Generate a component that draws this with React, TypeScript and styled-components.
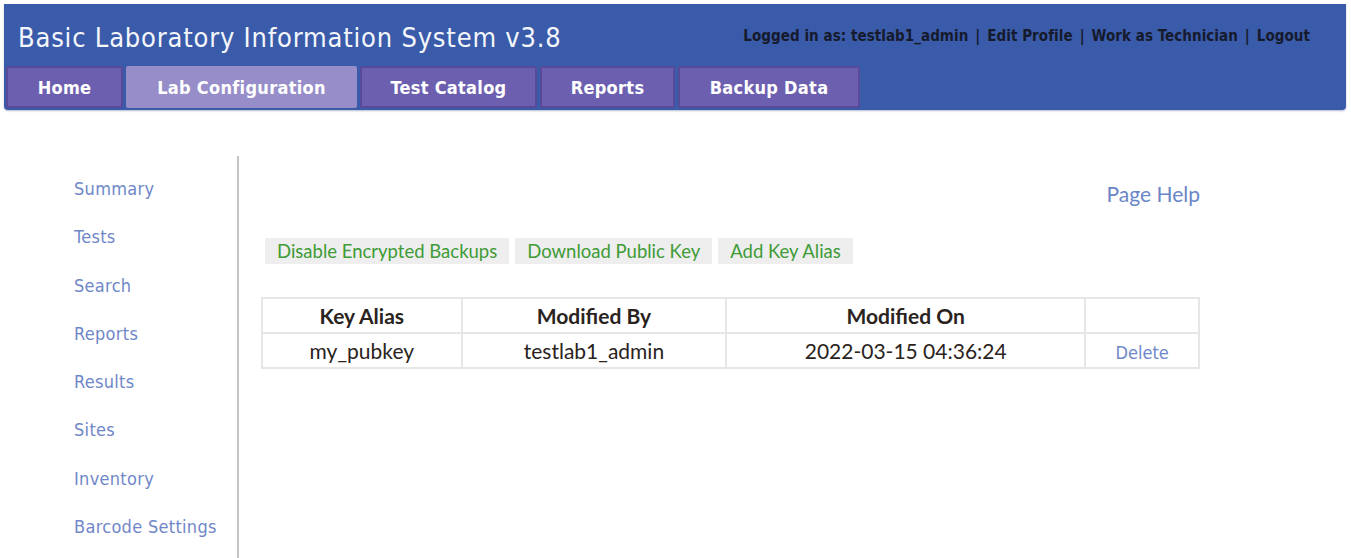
import React from "react";
import styled, { createGlobalStyle } from "styled-components";

const GlobalStyle = createGlobalStyle`
  html, body {
    margin: 0;
    padding: 0;
    background: #ffffff;
  }
  body {
    font-family: "DejaVu Sans Condensed", "DejaVu Sans", sans-serif;
  }
`;

const tahoma = `"DejaVu Sans Condensed", "DejaVu Sans", sans-serif`;
const calibri = `Lato, "Open Sans", sans-serif`;

const Page = styled.div`
  padding: 4px 5px 0 4px;
  height: 558px;
  box-sizing: border-box;
  overflow: hidden;
`;

const Header = styled.header`
  background: #3a5ba9;
  height: 106px;
  border-radius: 0 0 4px 4px;
  box-shadow: 0 1px 2px rgba(40, 60, 120, 0.35);
  display: flex;
  flex-direction: column;
  justify-content: space-between;
`;

const TopRow = styled.div`
  display: flex;
  justify-content: space-between;
  align-items: center;
  padding: 18px 36px 0 14px;
`;

const Title = styled.h1`
  margin: 0;
  font-family: ${tahoma};
  font-weight: normal;
  font-size: 27px;
  color: #f4f6fb;
  letter-spacing: 0.8px;
`;

const UserBar = styled.div`
  font-family: ${tahoma};
  font-weight: bold;
  font-size: 15px;
  letter-spacing: 0.05px;
  color: #151a2c;
  margin-top: -4px;
  a {
    color: inherit;
    text-decoration: none;
  }
`;

const Sep = styled.span`
  margin: 0 7px;
`;

const Tabs = styled.nav`
  display: flex;
  gap: 3px;
  padding: 0 0 2px 2px;
`;

const Tab = styled.a<{ $w: number; $active?: boolean }>`
  width: ${({ $w }) => $w}px;
  height: 42px;
  box-sizing: border-box;
  display: flex;
  align-items: center;
  justify-content: center;
  font-family: ${tahoma};
  font-weight: bold;
  font-size: 18px;
  letter-spacing: 0.3px;
  color: #ffffff;
  text-decoration: none;
  background: ${({ $active }) => ($active ? "#978dc9" : "#6d5fb0")};
  border: 2px solid ${({ $active }) => ($active ? "#978dc9" : "#574a98")};
  border-radius: 2px;
`;

const Body = styled.div`
  display: flex;
  margin-top: 46px;
`;

const Sidebar = styled.aside`
  width: 235px;
  flex-shrink: 0;
  border-right: 2px solid #c4c4c4;
  height: 420px;
  padding: 22px 0 0 70px;
  box-sizing: border-box;
  display: flex;
  flex-direction: column;
  gap: 26.3px;
`;

const SideLink = styled.a`
  font-family: ${tahoma};
  font-size: 18px;
  letter-spacing: 0.3px;
  line-height: 22px;
  color: #6f87c8;
  text-decoration: none;
`;

const Content = styled.main`
  width: 961px;
  box-sizing: border-box;
  padding: 26px 0 0 22px;
  display: flex;
  flex-direction: column;
`;

const HelpLink = styled.a`
  align-self: flex-end;
  font-family: ${calibri};
  font-size: 21px;
  line-height: 24px;
  color: #6a86c6;
  text-decoration: none;
`;

const Actions = styled.div`
  display: flex;
  gap: 6px;
  margin: 32px 0 0 4px;
`;

const ActionButton = styled.a`
  background: #eeeeee;
  color: #3e9b36;
  font-family: ${calibri};
  font-size: 18.5px;
  height: 26px;
  padding: 0 12px;
  display: flex;
  align-items: center;
  text-decoration: none;
`;

const Table = styled.table`
  margin-top: 33px;
  width: 939px;
  border-collapse: collapse;
  font-family: ${calibri};
  color: #2a2320;
  th,
  td {
    border: 2px solid #e6e6e6;
    height: 35px;
    padding: 0;
    text-align: center;
    box-sizing: border-box;
  }
  th {
    font-weight: bold;
    font-size: 21px;
  }
  td {
    font-size: 21px;
  }
`;

const DeleteLink = styled.a`
  font-family: ${tahoma};
  font-size: 18px;
  color: #6f87c8;
  text-decoration: none;
`;

const tabs = [
  { label: "Home", w: 117 },
  { label: "Lab Configuration", w: 231, active: true },
  { label: "Test Catalog", w: 177 },
  { label: "Reports", w: 135 },
  { label: "Backup Data", w: 182 },
];

const sideLinks = [
  "Summary",
  "Tests",
  "Search",
  "Reports",
  "Results",
  "Sites",
  "Inventory",
  "Barcode Settings",
];

const keys = [
  {
    alias: "my_pubkey",
    by: "testlab1_admin",
    on: "2022-03-15 04:36:24",
  },
];

export default function App() {
  return (
    <>
      <GlobalStyle />
      <Page>
        <Header>
          <TopRow>
            <Title>Basic Laboratory Information System v3.8</Title>
            <UserBar>
              Logged in as: testlab1_admin<Sep>|</Sep>
              <a href="#">Edit Profile</a>
              <Sep>|</Sep>
              <a href="#">Work as Technician</a>
              <Sep>|</Sep>
              <a href="#">Logout</a>
            </UserBar>
          </TopRow>
          <Tabs>
            {tabs.map((t) => (
              <Tab key={t.label} href="#" $w={t.w} $active={t.active}>
                {t.label}
              </Tab>
            ))}
          </Tabs>
        </Header>
        <Body>
          <Sidebar>
            {sideLinks.map((l) => (
              <SideLink key={l} href="#">
                {l}
              </SideLink>
            ))}
          </Sidebar>
          <Content>
            <HelpLink href="#">Page Help</HelpLink>
            <Actions>
              <ActionButton href="#">Disable Encrypted Backups</ActionButton>
              <ActionButton href="#">Download Public Key</ActionButton>
              <ActionButton href="#">Add Key Alias</ActionButton>
            </Actions>
            <Table>
              <colgroup>
                <col style={{ width: 200 }} />
                <col style={{ width: 265 }} />
                <col style={{ width: 360 }} />
                <col style={{ width: 114 }} />
              </colgroup>
              <thead>
                <tr>
                  <th>Key Alias</th>
                  <th>Modified By</th>
                  <th>Modified On</th>
                  <th></th>
                </tr>
              </thead>
              <tbody>
                {keys.map((k) => (
                  <tr key={k.alias}>
                    <td>{k.alias}</td>
                    <td>{k.by}</td>
                    <td>{k.on}</td>
                    <td>
                      <DeleteLink href="#">Delete</DeleteLink>
                    </td>
                  </tr>
                ))}
              </tbody>
            </Table>
          </Content>
        </Body>
      </Page>
    </>
  );
}
